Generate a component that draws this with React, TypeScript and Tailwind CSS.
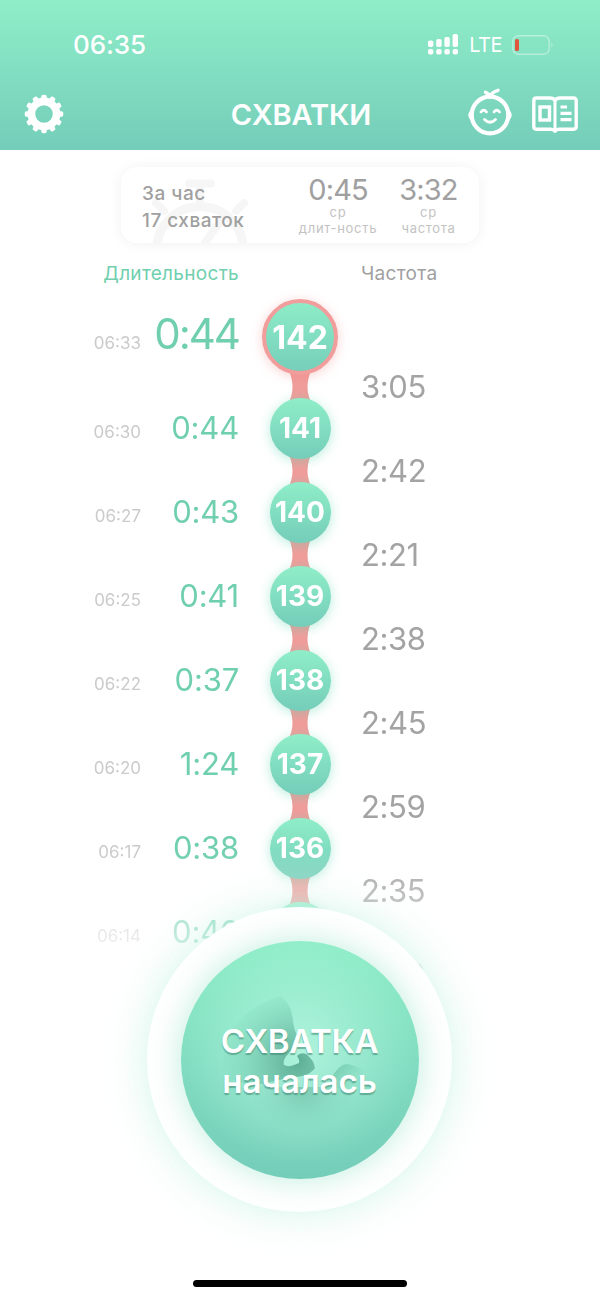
type Contraction = {
  id: number;
  time: string;
  duration: string;
};

const CONTRACTIONS: Contraction[] = [
  { id: 142, time: "06:33", duration: "0:44" },
  { id: 141, time: "06:30", duration: "0:44" },
  { id: 140, time: "06:27", duration: "0:43" },
  { id: 139, time: "06:25", duration: "0:41" },
  { id: 138, time: "06:22", duration: "0:37" },
  { id: 137, time: "06:20", duration: "1:24" },
  { id: 136, time: "06:17", duration: "0:38" },
  { id: 135, time: "06:14", duration: "0:46" },
];

const INTERVALS = ["3:05", "2:42", "2:21", "2:38", "2:45", "2:59", "2:35", "2:52"];

const GEAR_TEETH = Array.from({ length: 12 }, (_, i) => i * 30);

function SignalIcon() {
  const tops = [6.5, 5, 3, 0];
  return (
    <svg width="31" height="21" viewBox="0 0 31 21" fill="white">
      {tops.map((top, i) => (
        <g key={top}>
          <rect x={i * 8.2} y={top} width="5.4" height={13 - top} rx="1.8" />
          <rect x={i * 8.2} y="15" width="5.4" height="5.6" rx="2" />
        </g>
      ))}
    </svg>
  );
}

function BatteryIcon() {
  return (
    <svg width="42" height="20" viewBox="0 0 42 20" fill="none">
      <rect x="0.8" y="0.8" width="36.4" height="18.4" rx="5.5" stroke="white" strokeOpacity="0.4" strokeWidth="1.4" />
      <rect x="3" y="4" width="4" height="12" rx="1.6" fill="#e2553d" />
      <path d="M39.5 7.2q2 2.8 0 5.6z" fill="white" fillOpacity="0.5" />
    </svg>
  );
}

function GearIcon() {
  return (
    <svg width="40" height="40" viewBox="-20 -20 40 40">
      <circle r="12.6" fill="none" stroke="white" strokeWidth="7.6" />
      {GEAR_TEETH.map((angle) => (
        <rect key={angle} x="-2.7" y="-19.3" width="5.4" height="7" rx="1.8" fill="white" transform={`rotate(${angle})`} />
      ))}
    </svg>
  );
}

function BabyIcon() {
  return (
    <svg width="46" height="48" viewBox="0 0 46 48" fill="none" stroke="white" strokeLinecap="round" strokeLinejoin="round">
      <circle cx="23" cy="27" r="18.3" strokeWidth="4.2" />
      <path d="M5 22.5q-5 4.5 0 9zM41 22.5q5 4.5 0 9z" fill="white" strokeWidth="2.6" />
      <path d="M23 9Q24 4.5 31 2.3M23 9Q22 5.5 18.5 4.3" strokeWidth="3.4" />
      <path d="M14 24q2.7-3.5 5.5 0M27 24q2.7-3.5 5.5 0" strokeWidth="2.8" />
      <path d="M17.5 31.5q5.5 5.5 11 0" strokeWidth="2.8" />
    </svg>
  );
}

function BookIcon() {
  return (
    <svg width="46" height="38" viewBox="0 0 46 38" fill="none" stroke="white" strokeLinejoin="round" strokeLinecap="round">
      <path
        d="M23 4.5Q21.5 2 18 2H4.500Q1.800 2 1.800 4.700V30.500Q1.800 33.200 4.500 33.200H19Q21.500 33.200 23 35.200Q24.500 33.200 27 33.200H41.500Q44.200 33.200 44.200 30.500V4.700Q44.200 2 41.500 2H28Q24.500 2 23 4.500Z"
        strokeWidth="3.4"
      />
      <path d="M23 5V34" strokeWidth="3" />
      <rect x="8" y="11" width="9.5" height="13" strokeWidth="3.4" strokeLinejoin="miter" />
      <path d="M28.5 11H35M28.5 17.3H39.5M28.5 23.6H39.5" strokeWidth="3.2" strokeLinecap="butt" />
    </svg>
  );
}

function StopwatchMark() {
  return (
    <svg className="absolute left-[26px] top-[10px]" width="106" height="66" viewBox="0 0 106 66" fill="none" stroke="#f6f6f6">
      <circle cx="53" cy="73" r="43.5" strokeWidth="9" />
      <path d="M42 6.5H64M53 8V28" strokeWidth="8" strokeLinecap="round" />
      <path d="M9 26l8 8M97 26l-8 8M76 40L58 66" strokeWidth="8" strokeLinecap="round" />
    </svg>
  );
}

function Connector() {
  return (
    <svg className="-my-[10px] shrink-0" width="32" height="43" viewBox="0 0 32 43">
      <path d="M2 0Q15 22 2 43H30Q17 22 30 0Z" fill="#f09d9b" />
    </svg>
  );
}

function EmbryoMark() {
  return (
    <svg className="absolute inset-0" width="238" height="238" viewBox="0 0 238 238">
      <defs>
        <radialGradient id="head" gradientUnits="userSpaceOnUse" cx="116" cy="120" r="78">
          <stop offset="0" stopColor="#4f9f87" stopOpacity="0.85" />
          <stop offset="0.45" stopColor="#5fb59b" stopOpacity="0.55" />
          <stop offset="1" stopColor="#6fd0b0" stopOpacity="0" />
        </radialGradient>
        <linearGradient id="knee" x1="0" y1="0" x2="0.9" y2="0.5">
          <stop offset="0" stopColor="#5fb79c" stopOpacity="0.8" />
          <stop offset="1" stopColor="#6fd0b0" stopOpacity="0" />
        </linearGradient>
        <radialGradient id="belly" gradientUnits="userSpaceOnUse" cx="122" cy="148" r="54" gradientTransform="translate(0 30) scale(1 0.8)">
          <stop offset="0" stopColor="#5aa891" stopOpacity="0.5" />
          <stop offset="1" stopColor="#6fd0b0" stopOpacity="0" />
        </radialGradient>
      </defs>
      <path
        d="M98 55Q110 60 112 80Q113 90 117 95Q116 104 108 112Q101 119 103 124Q108 127 118 122Q119 119 116 115Q119 111 125 113Q133 119 134 127Q131 132 122 135Q100 138 90 141Q66 148 42 134Q38 76 98 55Z"
        fill="url(#head)"
      />
      <path d="M150 138Q157 124 166 123Q177 125 187 132Q178 150 150 146Z" fill="url(#knee)" />
      <path d="M72 146H170Q172 162 165 175Q145 194 120 194Q88 190 72 160Z" fill="url(#belly)" />
    </svg>
  );
}

function Header() {
  return (
    <header className="h-[150px] shrink-0 bg-linear-to-b from-[#8feec8] to-[#74cdb9] text-white">
      <div className="flex h-[89px] items-center justify-between pl-[73px] pr-[46px]">
        <span className="text-[26px] font-medium leading-none tracking-[-0.1px]">06:35</span>
        <div className="flex items-center">
          <SignalIcon />
          <span className="mx-[10px] text-[20px] leading-none tracking-[-0.5px]">LTE</span>
          <BatteryIcon />
        </div>
      </div>
      <div className="grid h-[50px] grid-cols-[1fr_auto_1fr] items-center pl-6 pr-[22px]">
        <GearIcon />
        <h1 className="text-[29px] font-semibold leading-none tracking-[-0.1px]">СХВАТКИ</h1>
        <div className="-mt-1 flex items-center justify-end gap-[19px]">
          <BabyIcon />
          <div className="pt-[5px]">
            <BookIcon />
          </div>
        </div>
      </div>
    </header>
  );
}

function Summary() {
  return (
    <section className="relative mx-auto mt-[17px] flex h-[76px] w-[358px] shrink-0 rounded-2xl bg-white shadow-[0_1px_14px_rgba(0,0,0,0.06)]">
      <StopwatchMark />
      <div className="relative w-[167px] pl-[21px] pt-[13px] text-[19px] font-medium leading-[27px] tracking-[0.5px] text-[#a0a0a0]">
        <p>За час</p>
        <p>17 схваток</p>
      </div>
      <div className="w-[100px] pt-[8px] text-center text-[13px] leading-4 tracking-[0.7px] text-[#c3c3c3]">
        <p className="text-[29px] leading-[29px] tracking-[-0.9px] text-[#a0a0a0]">0:45</p>
        <p>ср</p>
        <p>длит-ность</p>
      </div>
      <div className="w-[81px] pt-[8px] text-center text-[13px] leading-4 tracking-[0.7px] text-[#c3c3c3]">
        <p className="text-[29px] leading-[29px] tracking-[-0.9px] text-[#a0a0a0]">3:32</p>
        <p>ср</p>
        <p>частота</p>
      </div>
    </section>
  );
}

function Timeline() {
  return (
    <div className="flex h-[715px] shrink-0 overflow-hidden mask-[linear-gradient(to_bottom,black_565px,transparent_710px)]">
      <div className="w-[239px] shrink-0">
        {CONTRACTIONS.map((item, i) => (
          <div key={item.id} className={i === 0 ? "flex h-[100px] items-center justify-end pb-[3px]" : "flex h-[84px] items-center justify-end"}>
            <span
              className={
                i === 0
                  ? "w-[70px] pt-[19px] text-right text-[17px] leading-none text-[#cbcbcb]"
                  : "w-[70px] pt-[11px] text-right text-[17px] leading-none text-[#cbcbcb]"
              }
            >
              {item.time}
            </span>
            <span
              className={
                i === 0
                  ? "w-[98px] text-right text-[42px] leading-none tracking-[-2px] text-[#6fcfae]"
                  : "w-[98px] text-right text-[31px] leading-none tracking-[-0.2px] text-[#6fcfae]"
              }
            >
              {item.duration}
            </span>
          </div>
        ))}
      </div>
      <div className="flex w-[122px] shrink-0 flex-col items-center pt-[14px]">
        {CONTRACTIONS.map((item, i) => (
          <div key={item.id} className="contents">
            {i > 0 && <Connector />}
            {i === 0 ? (
              <div className="relative z-10 flex size-[76px] shrink-0 items-center justify-center rounded-full border-4 border-[#f09d9b] bg-linear-to-b from-[#8feec8] to-[#74cdb9] bg-origin-border pt-px text-[32px] font-bold leading-none text-white shadow-[0_2px_12px_rgba(240,130,130,0.35)]">
                {item.id}
              </div>
            ) : (
              <div className="relative z-10 flex size-[61px] shrink-0 items-center justify-center rounded-full bg-linear-to-b from-[#8feec8] to-[#74cdb9] pb-0.5 text-[28px] font-bold leading-none text-white shadow-[0_2px_12px_rgba(80,210,170,0.4)]">
                {item.id}
              </div>
            )}
          </div>
        ))}
      </div>
      <div className="pt-[59px]">
        {INTERVALS.map((interval) => (
          <div key={interval} className="flex h-[84px] items-center text-[31px] leading-none tracking-[-0.4px] text-[#a3a3a3]">
            {interval}
          </div>
        ))}
      </div>
    </div>
  );
}

function StartButton() {
  return (
    <button className="absolute left-[147px] top-[907px] z-20 flex size-[305px] items-center justify-center rounded-full bg-white shadow-[0_0_44px_rgba(120,225,190,0.33)]">
      <span className="relative flex size-[238px] flex-col items-center justify-center rounded-full bg-linear-to-b from-[#8feec8] to-[#74cdb9] pt-[3px] text-[33px] font-semibold leading-[40px] text-white shadow-[0_0_32px_rgba(110,215,180,0.45)]">
        <span className="absolute inset-0 rounded-full bg-[radial-gradient(circle_at_50%_46%,rgba(190,250,230,0.75),rgba(190,250,230,0)_66%)]" />
        <EmbryoMark />
        <span className="relative tracking-[-0.3px] [text-shadow:0_2px_1px_rgba(60,130,110,0.55)]">СХВАТКА</span>
        <span className="relative [text-shadow:0_2px_1px_rgba(60,130,110,0.55)]">началась</span>
      </span>
    </button>
  );
}

export default function App() {
  return (
    <div className="relative flex h-[1300px] w-[600px] flex-col overflow-hidden bg-white font-['Inter',sans-serif]">
      <Header />
      <Summary />
      <div className="mt-[18px] flex h-[24px] shrink-0 items-center pt-px text-[19px] leading-none tracking-[0.3px]">
        <span className="w-[239px] text-right text-[#6fcfae]">Длительность</span>
        <span className="ml-[122px] text-[#a0a0a0]">Частота</span>
      </div>
      <Timeline />
      <StartButton />
      <div className="absolute bottom-[13px] left-1/2 h-[7px] w-[214px] -translate-x-1/2 rounded-full bg-black" />
    </div>
  );
}
